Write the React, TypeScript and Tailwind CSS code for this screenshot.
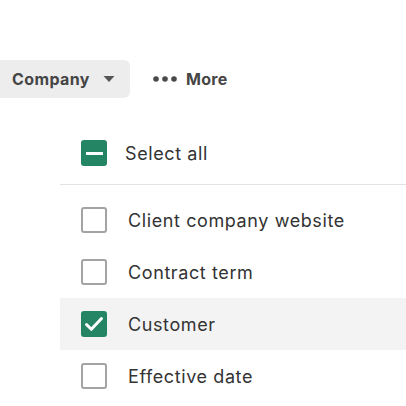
import React from "react";

interface Option {
  label: string;
  checked: boolean;
}

const options: Option[] = [
  { label: "Client company website", checked: false },
  { label: "Contract term", checked: false },
  { label: "Customer", checked: true },
  { label: "Effective date", checked: false },
];

function Box({ state }: { state: "none" | "checked" | "partial" }) {
  if (state === "none") {
    return <div className="w-[26px] h-[26px] rounded-[3px] border-2 border-[#a3a3a3] bg-white shrink-0"></div>;
  }
  return (
    <div className="w-[26px] h-[26px] rounded-[3px] bg-[#248564] flex items-center justify-center shrink-0">
      {state === "checked" ? (
        <svg width="22" height="22" viewBox="0 0 22 22" fill="none">
          <path d="M3.5 11.5l4.8 4.8L18.5 5.5" stroke="white" strokeWidth="3" strokeLinecap="round" strokeLinejoin="round" />
        </svg>
      ) : (
        <div className="w-[17px] h-[3px] bg-white"></div>
      )}
    </div>
  );
}

export default function App() {
  return (
    <div className="w-[406px] h-[406px] bg-white overflow-hidden" style={{ fontFamily: "Inter, 'Noto Sans', sans-serif" }}>
      <div className="flex items-center mt-[60px] h-[38px]">
        <div className="w-[130px] h-full bg-[#ededed] rounded-r-[6px] flex items-center pl-[12px] text-[16px] font-bold tracking-[0.4px] text-[#454545]">
          Company
          <svg className="ml-[13px]" width="12" height="8" viewBox="0 0 12 8">
            <path d="M0.5 1h11L6 7z" fill="#555" />
          </svg>
        </div>
        <div className="flex items-center ml-[23px] text-[16px] font-bold tracking-[0.3px] text-[#454545]">
          <svg width="24" height="6" viewBox="0 0 24 6">
            <circle cx="3" cy="3" r="2.8" fill="#4a4a4a" />
            <circle cx="12" cy="3" r="2.8" fill="#4a4a4a" />
            <circle cx="21" cy="3" r="2.8" fill="#4a4a4a" />
          </svg>
          <span className="ml-[9px]">More</span>
        </div>
      </div>
      <div className="ml-[60px] mt-[33px]">
        <div className="flex items-center h-[44px] pl-[21px] mb-[9px]">
          <Box state="partial" />
          <span className="ml-[18px] text-[18px] tracking-[0.6px] text-[#333]">Select all</span>
        </div>
        <div className="border-t border-[#e3e3e3] pt-[9px]">
          {options.map((o) => (
            <div key={o.label} className={`flex items-center h-[52px] pl-[21px] ${o.checked ? "bg-[#f3f3f3]" : ""}`}>
              <Box state={o.checked ? "checked" : "none"} />
              <span className="ml-[21px] text-[18px] tracking-[0.6px] text-[#333]">{o.label}</span>
            </div>
          ))}
        </div>
      </div>
    </div>
  );
}
